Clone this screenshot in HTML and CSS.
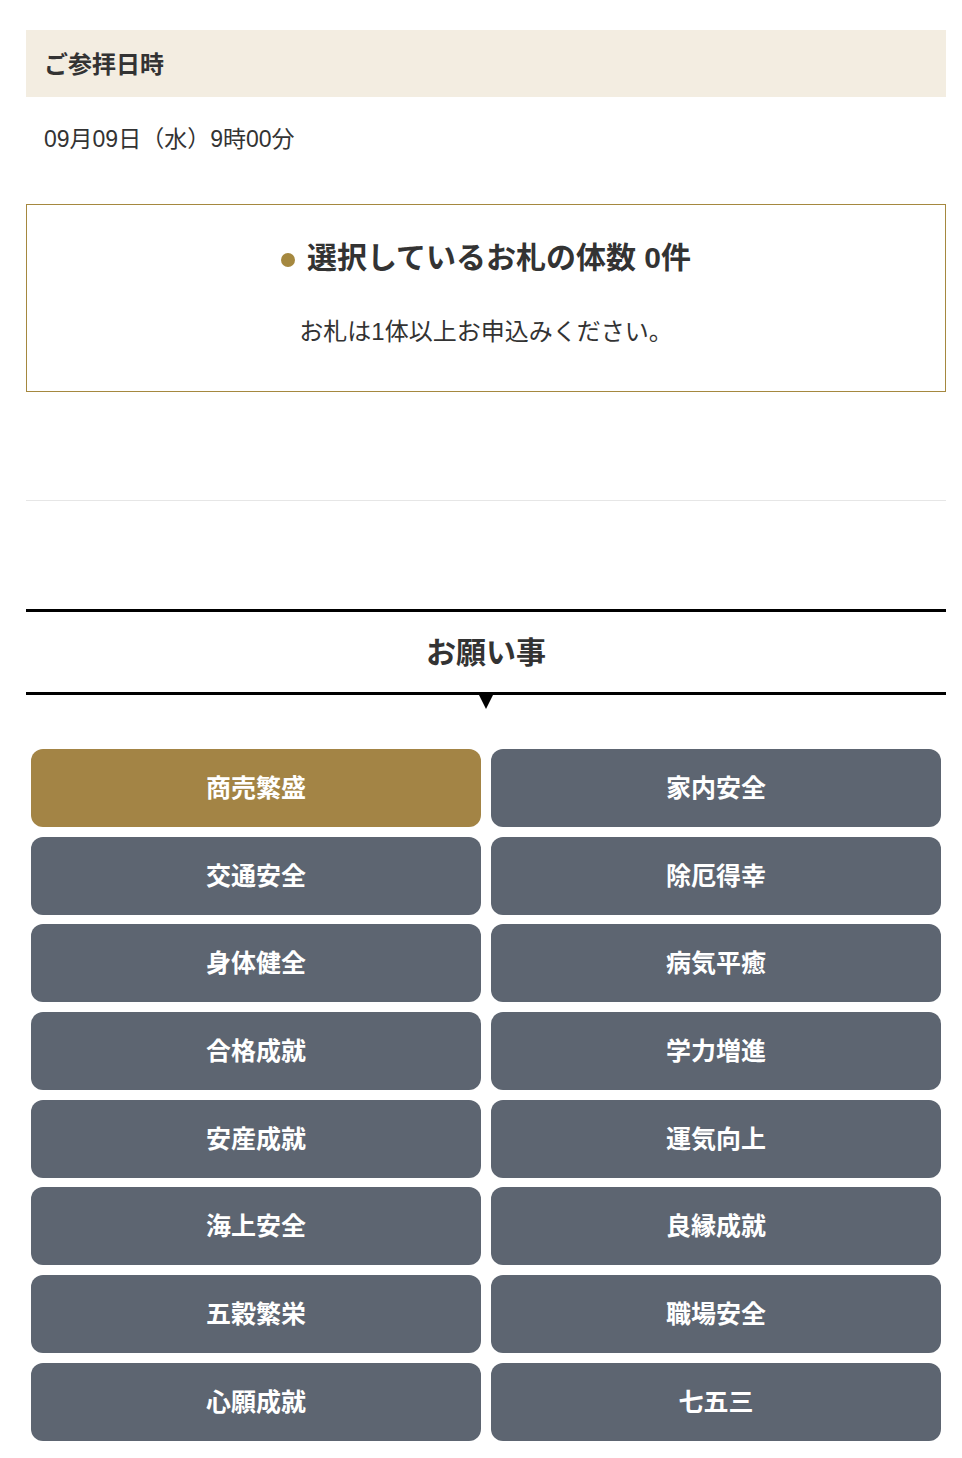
FILE: index.html
```html
<!DOCTYPE html>
<html lang="ja">

<head>
    <meta charset="UTF-8">
    <meta name="viewport" content="width=device-width, initial-scale=1.0">
    <title>ご参拝日時</title>

    <link rel="stylesheet" href="styles.css">
</head>

<body>
    <main class="page">
        <section class="visit">
            <h2 class="visit-title">ご参拝日時</h2>
            <p class="visit-date">09月09日（水）9時00分</p>
        </section>

        <section class="selected">
            <p class="selected-title"><span class="dot"></span>選択しているお札の体数 0件</p>
            <p class="selected-note">お札は1体以上お申込みください。</p>
        </section>

        <hr class="divider">

        <section class="wishes">
            <h2 class="wishes-title">お願い事</h2>
            <div class="wishes-grid">
                <button class="wish active" type="button">商売繁盛</button>
                <button class="wish" type="button">家内安全</button>
                <button class="wish" type="button">交通安全</button>
                <button class="wish" type="button">除厄得幸</button>
                <button class="wish" type="button">身体健全</button>
                <button class="wish" type="button">病気平癒</button>
                <button class="wish" type="button">合格成就</button>
                <button class="wish" type="button">学力増進</button>
                <button class="wish" type="button">安産成就</button>
                <button class="wish" type="button">運気向上</button>
                <button class="wish" type="button">海上安全</button>
                <button class="wish" type="button">良縁成就</button>
                <button class="wish" type="button">五穀繁栄</button>
                <button class="wish" type="button">職場安全</button>
                <button class="wish" type="button">心願成就</button>
                <button class="wish" type="button">七五三</button>
            </div>
        </section>
    </main>
</body>

</html>
```

FILE: styles.css
```css
* {
    padding: 0;
    margin: 0;
    box-sizing: border-box;
}

body {
    font-family: "Liberation Sans", "Noto Sans CJK JP", sans-serif;
    color: #333;
    background-color: #fff;
}

.page {
    padding: 30px 16px 16px 26px;
}

.visit-title {
    background-color: #f3ede1;
    height: 67px;
    display: flex;
    align-items: center;
    padding-left: 18px;
    padding-bottom: 3px;
    font-size: 24px;
    font-weight: 700;
    color: #333;
}

.visit-date {
    padding: 26px 18px 0;
    font-size: 23px;
    line-height: 32px;
    height: 107px;
}

.selected {
    border: 1px solid #a5883f;
    height: 188px;
    text-align: center;
    padding-top: 34px;
}

.selected-title {
    font-size: 30px;
    font-weight: 700;
    line-height: 38px;
    display: flex;
    align-items: center;
    justify-content: center;
    gap: 12px;
}

.dot {
    width: 14px;
    height: 14px;
    border-radius: 50%;
    background-color: #a5883f;
    margin-top: 3px;
}

.selected-note {
    font-size: 24px;
    line-height: 30px;
    margin-top: 40px;
}

.divider {
    border: none;
    border-top: 1px solid #e6e6e6;
    margin-top: 108px;
}

.wishes {
    margin-top: 108px;
}

.wishes-title {
    border-top: 3px solid #000;
    border-bottom: 3px solid #000;
    height: 86px;
    display: flex;
    align-items: center;
    justify-content: center;
    padding-bottom: 4px;
    font-size: 30px;
    font-weight: 700;
    color: #333;
    position: relative;
}

.wishes-title::after {
    content: "";
    position: absolute;
    left: 50%;
    bottom: -17px;
    margin-left: -7px;
    border-left: 7px solid transparent;
    border-right: 7px solid transparent;
    border-top: 14px solid #000;
}

.wishes-grid {
    display: grid;
    grid-template-columns: 1fr 1fr;
    column-gap: 10px;
    row-gap: 9.7px;
    padding: 54px 5px 0;
}

.wish {
    height: 78px;
    border: none;
    border-radius: 12px;
    background-color: #5d6571;
    color: #fff;
    font-family: inherit;
    font-size: 25px;
    font-weight: 700;
    padding-bottom: 4px;
    cursor: pointer;
}

.wish.active {
    background-color: #a38445;
}
```
